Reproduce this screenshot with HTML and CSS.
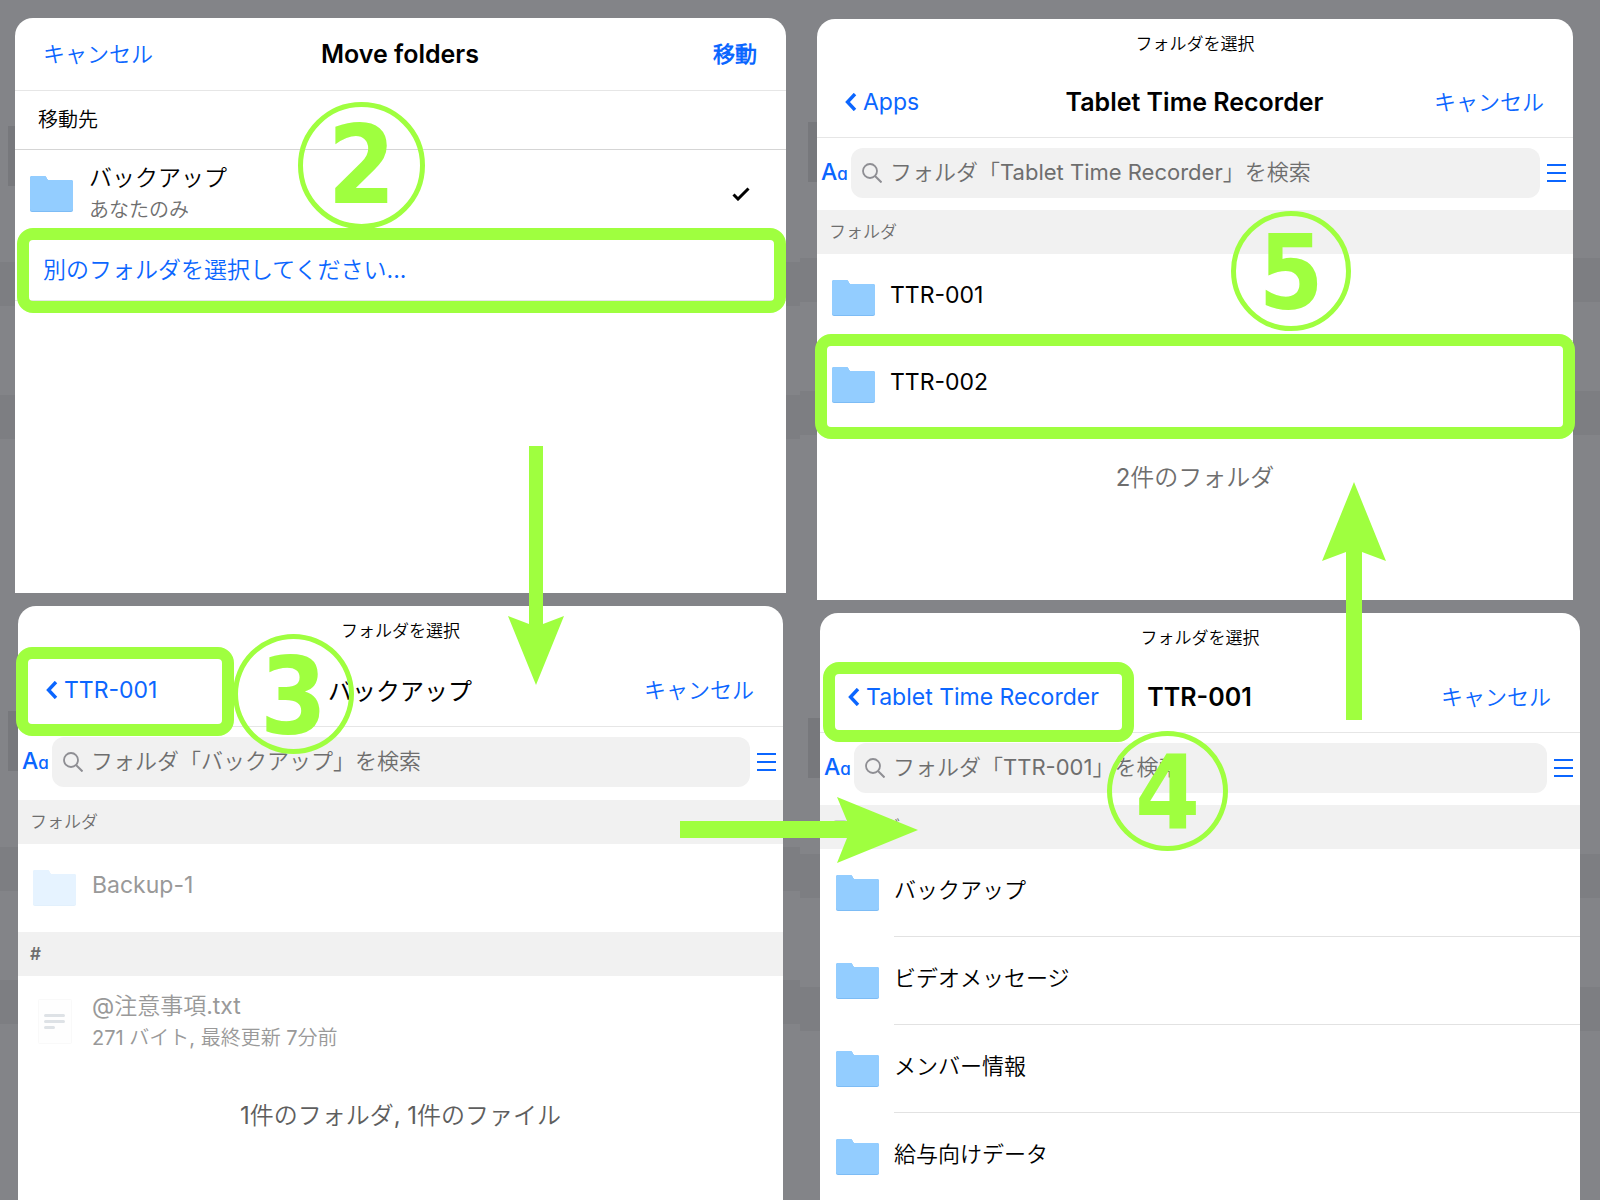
FILE: index.html
```html
<!DOCTYPE html>
<html lang="ja">
<head>
<meta charset="utf-8">
<title>フォルダの移動手順</title>
<link rel="stylesheet" href="styles.css">
</head>
<body>
<svg class="defs" aria-hidden="true">
  <symbol id="folder" viewBox="0 0 43 36">
    <path d="M0 2a2 2 0 0 1 2-2h12c1.600 0 2 .6 2.600 2 .6 1.400 1.200 2 2.600 2H41a2 2 0 0 1 2 2v28a2 2 0 0 1-2 2H2a2 2 0 0 1-2-2z" fill="#7dbcf5"/>
    <path d="M0 2a2 2 0 0 1 2-2h12c1.600 0 2 .6 2.600 2 .6 1.400 1.200 2 2.600 2H41a2 2 0 0 1 2 2v27a2 2 0 0 1-2 2H2a2 2 0 0 1-2-2z" fill="#93cdff"/>
  </symbol>
  <symbol id="file" viewBox="0 0 43 46">
    <rect x="5.500" y=".5" width="33" height="44" rx="1" fill="#fefefe" stroke="#f9f9f9"/>
    <path d="M12.500 16.500h18M12.500 22.500h18M12.500 28.500h8" stroke="#dee2e6" stroke-width="3" stroke-linecap="round"/>
  </symbol>
  <symbol id="chevron" viewBox="0 0 12 18">
    <path d="M10 1 2.500 9l7.500 8" fill="none" stroke="#0b66ff" stroke-width="3.400"/>
  </symbol>
  <symbol id="check" viewBox="0 0 18 14">
    <path d="M1.500 7.500 6 12 16.500 1.500" fill="none" stroke="#000" stroke-width="3"/>
  </symbol>
  <symbol id="search" viewBox="0 0 20 20">
    <circle cx="8" cy="8" r="7" fill="none" stroke="#8e8e93" stroke-width="1.800"/>
    <path d="M13 13l6.500 6.500" stroke="#8e8e93" stroke-width="2"/>
  </symbol>
  <symbol id="lines" viewBox="0 0 19 18">
    <path d="M0 1h19M0 9h19M0 17h19" stroke="#0b66ff" stroke-width="2"/>
  </symbol>
</svg>

<main class="board">
  <div class="column">
    <section class="screen screen-first">
      <article class="sheet sheet-first">
        <header class="bar">
          <button class="action">キャンセル</button>
          <h2 class="title">Move folders</h2>
          <button class="action action-end action-strong">移動</button>
        </header>
        <h3 class="destination">移動先</h3>
        <div class="row">
          <svg class="folder"><use href="#folder"/></svg>
          <div class="texts">
            <p class="name">バックアップ</p>
            <p class="meta">あなたのみ</p>
          </div>
          <svg class="check"><use href="#check"/></svg>
        </div>
        <div class="pick">
          <a class="pick-link" href="#">別のフォルダを選択してください...</a>
          <span class="highlight highlight-pick"></span>
        </div>
        <span class="badge badge-two">2</span>
      </article>
    </section>

    <section class="screen screen-last">
      <article class="sheet sheet-backup">
        <p class="caption">フォルダを選択</p>
        <header class="nav">
          <button class="action back"><svg class="chevron"><use href="#chevron"/></svg>TTR-001</button>
          <h2 class="title title-jp">バックアップ</h2>
          <button class="action action-end">キャンセル</button>
          <span class="highlight highlight-back"></span>
        </header>
        <div class="search">
          <button class="sort" aria-label="並べ替え">A<span class="small-a">a</span></button>
          <label class="field"><svg class="glass"><use href="#search"/></svg><input class="input" type="text" aria-label="検索" placeholder="フォルダ「バックアップ」を検索"></label>
          <button class="view" aria-label="表示"><svg class="lines"><use href="#lines"/></svg></button>
        </div>
        <h3 class="group">フォルダ</h3>
        <div class="row faded">
          <svg class="folder pale"><use href="#folder"/></svg>
          <p class="name">Backup-1</p>
        </div>
        <h3 class="group group-mark">#</h3>
        <div class="row row-file faded">
          <svg class="file"><use href="#file"/></svg>
          <div class="texts">
            <p class="name">@注意事項.txt</p>
            <p class="meta">271 バイト, 最終更新 7分前</p>
          </div>
        </div>
        <p class="count count-dark">1件のフォルダ, 1件のファイル</p>
        <span class="badge badge-three">3</span>
      </article>
    </section>
  </div>

  <div class="column">
    <section class="screen screen-apps">
      <article class="sheet sheet-apps">
        <p class="caption">フォルダを選択</p>
        <header class="nav">
          <button class="action back"><svg class="chevron"><use href="#chevron"/></svg>Apps</button>
          <h2 class="title">Tablet Time Recorder</h2>
          <button class="action action-end">キャンセル</button>
        </header>
        <div class="search">
          <button class="sort" aria-label="並べ替え">A<span class="small-a">a</span></button>
          <label class="field"><svg class="glass"><use href="#search"/></svg><input class="input" type="text" aria-label="検索" placeholder="フォルダ「Tablet Time Recorder」を検索"></label>
          <button class="view" aria-label="表示"><svg class="lines"><use href="#lines"/></svg></button>
        </div>
        <h3 class="group">フォルダ</h3>
        <div class="row">
          <svg class="folder"><use href="#folder"/></svg>
          <p class="name ruled">TTR-001</p>
        </div>
        <div class="row">
          <svg class="folder"><use href="#folder"/></svg>
          <p class="name">TTR-002</p>
          <span class="highlight highlight-row"></span>
        </div>
        <p class="count">2件のフォルダ</p>
        <span class="badge badge-five">5</span>
      </article>
    </section>

    <section class="screen screen-last">
      <article class="sheet sheet-ttr">
        <p class="caption">フォルダを選択</p>
        <header class="nav">
          <button class="action back"><svg class="chevron"><use href="#chevron"/></svg>Tablet Time Recorder</button>
          <h2 class="title">TTR-001</h2>
          <button class="action action-end">キャンセル</button>
          <span class="highlight highlight-parent"></span>
        </header>
        <div class="search">
          <button class="sort" aria-label="並べ替え">A<span class="small-a">a</span></button>
          <label class="field"><svg class="glass"><use href="#search"/></svg><input class="input" type="text" aria-label="検索" placeholder="フォルダ「TTR-001」を検索"></label>
          <button class="view" aria-label="表示"><svg class="lines"><use href="#lines"/></svg></button>
        </div>
        <h3 class="group">フォルダ</h3>
        <div class="row"><svg class="folder"><use href="#folder"/></svg><p class="name ruled">バックアップ</p></div>
        <div class="row"><svg class="folder"><use href="#folder"/></svg><p class="name ruled">ビデオメッセージ</p></div>
        <div class="row"><svg class="folder"><use href="#folder"/></svg><p class="name ruled">メンバー情報</p></div>
        <div class="row"><svg class="folder"><use href="#folder"/></svg><p class="name">給与向けデータ</p></div>
        <span class="badge badge-four">4</span>
      </article>
    </section>
  </div>

  <svg class="arrow arrow-down" viewBox="0 0 56 240"><path d="M21 0h14v178l21-8-28 69L0 170l21 8z"/></svg>
  <svg class="arrow arrow-right" viewBox="0 0 238 66"><path d="M0 24h167L157 0l81 33-81 33 10-25H0z"/></svg>
  <svg class="arrow arrow-up" viewBox="0 0 64 238"><path d="M24 238V70L0 79 32 0l32 79-24-9v168z"/></svg>
</main>
</body>
</html>
```
FILE: styles.css
```css
:root {
  --blue: #0b66ff;
  --lime: #9fff3f;
  --gray: #6e6e6e;
  --shade: #838488;
  --shade-dark: #7d7e82;
}

* { box-sizing: border-box; }

body {
  margin: 0;
  background: var(--shade);
  color: #000;
  font-family: Inter, "Noto Sans CJK JP DemiLight", "Noto Sans CJK JP Light", "Noto Sans CJK JP", sans-serif;
  font-size: 23px;
  line-height: 32px;
}

h2, h3, p { margin: 0; font-weight: 400; }

button {
  padding: 0;
  border: 0;
  background: none;
  color: inherit;
  font: inherit;
}

.defs { position: absolute; width: 0; height: 0; }

.board {
  position: relative;
  display: grid;
  grid-template-columns: 1fr 1fr;
  height: 100vh;
  overflow: hidden;
}

.column { display: flex; flex-direction: column; min-width: 0; }

.screen {
  --band: 254px;
  position: relative;
  display: flex;
  flex-direction: column;
  background:
    linear-gradient(var(--shade-dark), var(--shade-dark)) 0 var(--band) / 100% 44px no-repeat,
    linear-gradient(var(--shade-dark), var(--shade-dark)) 0 calc(var(--band) + 133px) / 100% 44px no-repeat,
    linear-gradient(#77787c, #77787c) 8px calc(var(--band) - 136px) / 24px 60px no-repeat,
    var(--shade);
}

.screen-first { --band: 262px; }
.screen-apps { --band: 258px; }
.screen-last { flex: 1; }

.sheet {
  position: relative;
  background: #fff;
  border-radius: 18px 18px 0 0;
}

.sheet-first { margin: 18px 14px 0 15px; padding-bottom: 292px; }
.sheet-apps { margin: 19px 27px 0 17px; padding-bottom: 106px; }
.sheet-backup { flex: 1; margin: 13px 17px 0 18px; }
.sheet-ttr { flex: 1; margin: 13px 20px 0; }

.bar, .nav {
  position: relative;
  display: grid;
  grid-template-columns: 1fr auto 1fr;
  align-items: center;
  padding: 0 29px 0 28px;
  border-bottom: 1px solid #e6e6e6;
}

.bar { height: 73px; }
.nav { height: 69px; padding-bottom: 2px; }
.sheet-ttr .nav { height: 70px; }
.sheet-backup .nav { height: 71px; }

.caption {
  height: 50px;
  font-size: 17px;
  line-height: 50px;
  text-align: center;
}

.title { font-size: 25px; font-weight: 600; }
.title-jp { font-family: "Noto Sans CJK JP", sans-serif; font-size: 24px; font-weight: 400; }

.action { justify-self: start; color: var(--blue); font-size: 22px; white-space: nowrap; }
.action-end { justify-self: end; }
.action-strong { font-weight: 700; }

.back { display: flex; align-items: center; gap: 6px; font-size: 23px; }
.chevron { width: 12px; height: 18px; }

.destination {
  height: 59px;
  padding-left: 23px;
  border-bottom: 1px solid #d5d5d5;
  font-size: 20px;
  line-height: 58px;
}

.row {
  position: relative;
  display: flex;
  align-items: center;
  gap: 16px;
  height: 88px;
  padding-left: 15px;
}

.sheet-apps .row { gap: 15px; height: 87px; }
.sheet-ttr .row { gap: 15px; padding-left: 16px; }
.sheet-ttr .name { font-size: 22px; }
.row-file { height: 92px; }

.folder { width: 43px; height: 36px; }
.file { width: 43px; height: 46px; }
.folder, .file, .check { flex: none; }
.pale { opacity: .22; }
.faded { color: #999; }

.texts { flex: 1; }
.meta { color: var(--gray); font-size: 20px; }
.faded .meta { color: #999; }

.ruled, .row > .name {
  flex: 1;
  align-self: stretch;
  line-height: 82px;
}

.ruled { border-bottom: 1px solid #e2e2e2; }

.check { width: 18px; height: 14px; margin-right: 36px; }

.pick { position: relative; height: 63px; padding-left: 28px; border-bottom: 1px solid #e6e6e6; }
.pick-link { color: var(--blue); line-height: 64px; text-decoration: none; }

.search {
  display: flex;
  align-items: center;
  padding: 10px 7px 12px 4px;
}

.sheet-backup .search { padding-bottom: 13px; }

.sort { width: 30px; color: var(--blue); font-size: 23px; font-weight: 500; text-align: left; white-space: nowrap; }
.small-a { font-size: 17px; font-feature-settings: "cv11"; }

.field {
  display: flex;
  flex: 1;
  align-items: center;
  gap: 8px;
  height: 50px;
  padding: 0 11px;
  border-radius: 12px;
  background: #f1f1f1;
}

.glass { flex: none; width: 20px; height: 20px; }

.input {
  flex: 1;
  min-width: 0;
  padding: 0 0 2px;
  border: 0;
  outline: 0;
  background: none;
  font: inherit;
  font-size: 22px;
}

.input::placeholder { color: var(--gray); opacity: 1; }

.view { display: flex; margin-left: 7px; }
.lines { width: 19px; height: 18px; }

.group {
  height: 44px;
  padding-left: 12px;
  background: #f1f1f1;
  color: var(--gray);
  font-size: 17px;
  line-height: 44px;
}

.group-mark { font-weight: 600; }

.count { padding-top: 34px; color: var(--gray); font-size: 24px; text-align: center; }
.count-dark { padding-top: 32px; color: #5e5e5e; }

.highlight {
  position: absolute;
  z-index: 1;
  border: 12px solid var(--lime);
  border-radius: 16px;
  pointer-events: none;
}

.highlight-pick { inset: -10px 0 -13px 2px; }
.highlight-row { inset: -7px -2px -11px -2px; }
.highlight-back { top: -9px; left: -2px; width: 218px; height: 89px; }
.highlight-parent { top: -1px; left: 3px; width: 311px; height: 80px; }

.badge {
  position: absolute;
  z-index: 2;
  display: flex;
  align-items: center;
  justify-content: center;
  width: 120px;
  height: 120px;
  padding-top: 4px;
  border: 5px solid var(--lime);
  border-radius: 50%;
  color: var(--lime);
  font: 700 104px/1 "DejaVu Sans Condensed", "DejaVu Sans", sans-serif;
}

.badge-two { top: 84px; left: 283px; width: 127px; height: 127px; padding-top: 0; font-size: 109px; }
.badge-three { top: 28px; left: 215px; width: 121px; font-size: 107px; }
.badge-five { top: 192px; left: 414px; }
.badge-four { top: 118px; left: 287px; width: 121px; }

.arrow { position: absolute; z-index: 3; fill: var(--lime); }
.arrow-down { top: 446px; left: 508px; width: 56px; height: 240px; }
.arrow-right { top: 797px; left: 680px; width: 238px; height: 66px; }
.arrow-up { top: 482px; left: 1322px; width: 64px; height: 238px; }
```
